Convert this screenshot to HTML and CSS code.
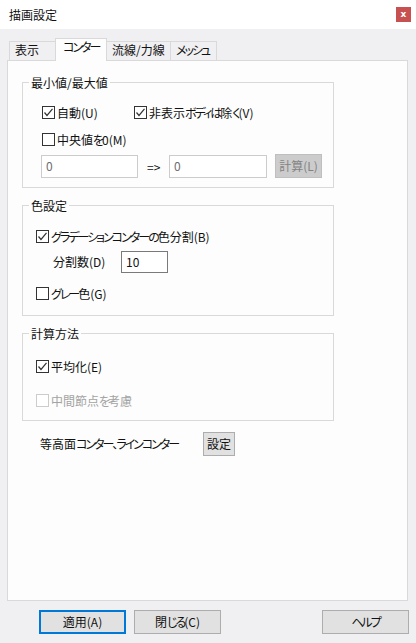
FILE: index.html
```html
<!DOCTYPE html>
<html lang="ja">
<head>
<meta charset="utf-8">
<link rel="stylesheet" href="styles.css">
</head>
<body>
<div class="titlebar"><span class="title">描画設定</span><span class="close">x</span></div>
<div class="tabs">
  <div class="tab t1">表示</div>
  <div class="tab sel"><span class="k">コンター</span></div>
  <div class="tab t3">流線/力線</div>
  <div class="tab t4"><span class="k">メッシュ</span></div>
</div>
<div class="panel">
  <fieldset class="grp g1">
    <legend>最小値/最大値</legend>
    <div class="row r1">
      <label class="chk auto"><span class="box"><svg viewBox="0 0 11 11" width="11" height="11"><path d="M1.5 5.5 L4 8.5 L9.5 1.8" fill="none" stroke="#333" stroke-width="1.2"/></svg></span>自動(U)</label>
      <label class="chk"><span class="box"><svg viewBox="0 0 11 11" width="11" height="11"><path d="M1.5 5.5 L4 8.5 L9.5 1.8" fill="none" stroke="#333" stroke-width="1.2"/></svg></span>非表示<span class="k">ボディは</span>除<span class="k">く</span>(V)</label>
    </div>
    <div class="row r2">
      <label class="chk"><span class="box"></span>中央値<span class="k">を</span>0(M)</label>
    </div>
    <div class="row r3">
      <div class="inp dis i1">0</div>
      <span class="arrow">=&gt;</span>
      <div class="inp dis i2">0</div>
      <div class="btn calc">計算(L)</div>
    </div>
  </fieldset>
  <fieldset class="grp g2">
    <legend>色設定</legend>
    <div class="row r4">
      <label class="chk"><span class="box"><svg viewBox="0 0 11 11" width="11" height="11"><path d="M1.5 5.5 L4 8.5 L9.5 1.8" fill="none" stroke="#333" stroke-width="1.2"/></svg></span><span class="k">グラデーションコンターの</span>色分割(B)</label>
    </div>
    <div class="row r5">
      <span class="divlabel">分割数(D)</span>
      <div class="inp num">10</div>
    </div>
    <div class="row r6">
      <label class="chk"><span class="box"></span><span class="k">グレー</span>色(G)</label>
    </div>
  </fieldset>
  <fieldset class="grp g3">
    <legend>計算方法</legend>
    <div class="row r7">
      <label class="chk"><span class="box"><svg viewBox="0 0 11 11" width="11" height="11"><path d="M1.5 5.5 L4 8.5 L9.5 1.8" fill="none" stroke="#333" stroke-width="1.2"/></svg></span>平均化(E)</label>
    </div>
    <div class="row r8">
      <label class="chk disabled"><span class="box"></span>中間節点<span class="k">を</span>考慮</label>
    </div>
  </fieldset>
  <div class="row r9">
    <span class="surf">等高面<span class="k">コンター、ラインコンター</span></span>
    <div class="btn set">設定</div>
  </div>
</div>
<div class="footer">
  <div class="btn fbtn apply">適用(A)</div>
  <div class="btn fbtn close2">閉<span class="k">じる</span>(C)</div>
  <div class="btn fbtn help"><span class="k">ヘルプ</span></div>
</div>
</body>
</html>
```

FILE: styles.css
```css
* { box-sizing: border-box; }
html, body { margin: 0; padding: 0; }
body {
  width: 416px;
  height: 643px;
  background: #f0eff2;
  font-family: "Noto Sans CJK JP", "Noto Sans", sans-serif;
  font-size: 12px;
  line-height: 16px;
  color: #111;
  font-feature-settings: "palt";
  overflow: hidden;
}
.k { letter-spacing: -2px; }
.titlebar {
  height: 29px;
  background: #fff;
  display: flex;
  align-items: center;
  padding-left: 9px;
}
.title { font-size: 12px; }
.close {
  margin-left: auto;
  margin-right: 5px;
  width: 15px;
  height: 15px;
  background: #c75050;
  color: #fff;
  font-family: "DejaVu Sans", sans-serif;
  font-weight: bold;
  font-size: 9px;
  line-height: 14px;
  text-align: center;
}
.tabs {
  display: flex;
  align-items: flex-end;
  margin-top: 9px;
  padding-left: 9px;
  height: 22px;
}
.tab {
  height: 19px;
  border: 1px solid #d9d9d9;
  border-bottom: none;
  padding-left: 5px;
  line-height: 16px;
  background: #f0eff2;
  white-space: nowrap;
}
.tab + .tab { margin-left: -1px; }
.t1 { width: 47px; }
.sel {
  width: 52px;
  height: 23px;
  margin-bottom: -1px;
  padding-left: 7px;
  background: #fcfdfc;
  position: relative;
  z-index: 1;
}
.t3 { width: 65px; }
.t4 { width: 47px; }
.panel {
  margin-left: 7px;
  width: 401px;
  height: 541px;
  border: 1px solid #d9d9d9;
  background: #fcfdfc;
  padding-top: 14px;
  padding-left: 14px;
}
.grp {
  margin: 0;
  padding: 0;
  width: 312px;
  border: 1px solid #d9d9d9;
  min-width: 0;
}
.grp legend {
  margin-left: 6px;
  padding: 0 2px;
  line-height: 15px;
  height: 15px;
}
.g1 { padding-bottom: 9px; }
.g2 { margin-top: 10px; padding-bottom: 15px; }
.g3 { margin-top: 10px; padding-bottom: 13px; }
.row {
  display: flex;
  align-items: center;
}
.chk {
  display: flex;
  align-items: center;
  height: 13px;
  white-space: nowrap;
}
.box {
  width: 13px;
  height: 13px;
  border: 1px solid #333;
  background: #fff;
  margin-right: 2px;
  display: flex;
  align-items: center;
  justify-content: center;
  flex: none;
}
.box svg { display: block; }
.disabled { color: #a3a3a3; }
.disabled .box { border-color: #cccccc; }
.r1 { margin-top: 16px; margin-left: 19px; height: 13px; }
.auto { width: 92px; }
.r2 { margin-top: 14px; margin-left: 19px; height: 13px; }
.r3 { margin-top: 8px; margin-left: 18px; height: 24px; align-items: flex-start; }
.inp {
  height: 23px;
  border: 1px solid #7a7a7a;
  background: #fff;
  padding-left: 4px;
  line-height: 20px;
  margin-top: 1px;
}
.inp.dis { border-color: #cccccc; color: #6d6d6d; }
.i1 { width: 97px; }
.i2 { width: 98px; }
.arrow { margin-left: 9px; width: 22px; line-height: 24px; margin-top: 1px; }
.btn {
  background: #e1e1e1;
  border: 1px solid #adadad;
  text-align: center;
  white-space: nowrap;
}
.calc {
  margin-left: 8px;
  width: 47px;
  height: 24px;
  line-height: 22px;
  background: #cccccc;
  border-color: #bfbfbf;
  color: #838383;
}
.r4 { margin-top: 17px; margin-left: 13px; height: 13px; }
.r5 { margin-top: 8px; margin-left: 30px; height: 22px; }
.divlabel { width: 68px; }
.num { width: 47px; height: 22px; margin-top: 0; line-height: 20px; }
.r6 { margin-top: 14px; margin-left: 13px; height: 13px; }
.r7 { margin-top: 19px; margin-left: 13px; height: 13px; }
.r8 { margin-top: 21px; margin-left: 13px; height: 13px; }
.r9 { margin-top: 11px; margin-left: 18px; height: 24px; }
.surf { width: 163px; white-space: nowrap; }
.set { width: 32px; height: 24px; line-height: 22px; }
.footer {
  display: flex;
  margin-top: 9px;
  padding-left: 39px;
}
.fbtn { width: 87px; height: 24px; line-height: 22px; }
.apply { border: 2px solid #0078d7; line-height: 20px; }
.close2 { margin-left: 8px; }
.help { margin-left: auto; margin-right: 7px; }
```
